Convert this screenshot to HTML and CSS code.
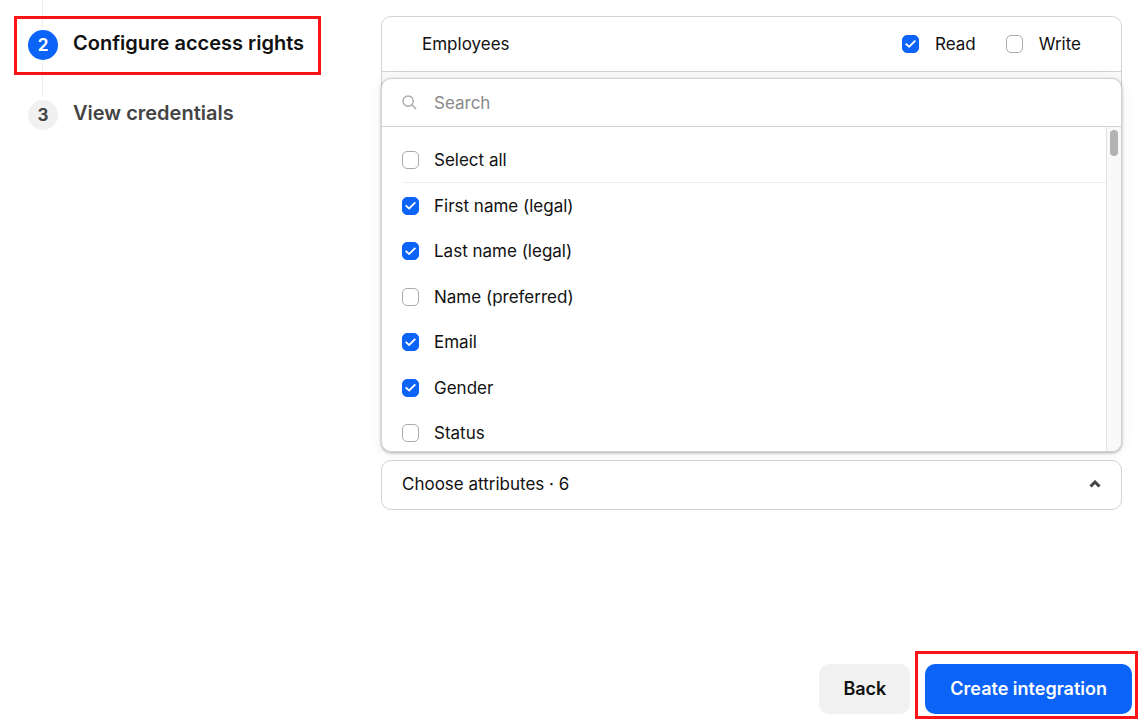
FILE: index.html
```html
<!DOCTYPE html>
<html lang="en">
  <head>
    <meta charset="UTF-8" />
    <meta name="viewport" content="width=device-width, initial-scale=1.0" />
    <link rel="stylesheet" href="styles.css">
    <title>Create integration</title>
  </head>
  <body>
    <div class="page">
      <div class="content">
        <ol class="steps">
          <li class="step step-done">
            <div class="marker"><span class="line"></span></div>
          </li>
          <li class="step step-active">
            <div class="marker">
              <span class="number">2</span>
              <span class="line"></span>
            </div>
            <h2 class="step-title highlight highlight-step">Configure access rights</h2>
          </li>
          <li class="step">
            <div class="marker"><span class="number">3</span></div>
            <h2 class="step-title">View credentials</h2>
          </li>
        </ol>

        <main class="access">
          <section class="card">
            <div class="card-header">
              <span class="card-name">Employees</span>
              <label class="option"><input type="checkbox" class="check" checked />Read</label>
              <label class="option"><input type="checkbox" class="check" />Write</label>
            </div>
          </section>

          <div class="select">
            <!-- opens upwards, above the select button -->
            <div class="dropdown" id="attributes">
              <div class="search">
                <svg class="search-icon" viewBox="0 0 16 16" aria-hidden="true">
                  <circle cx="6.5" cy="6.5" r="5.5" />
                  <path d="M10.5 10.5 15 15" />
                </svg>
                <input type="text" class="search-input" placeholder="Search" aria-label="Search" />
              </div>
              <div class="list">
                <div class="list-body">
                  <label class="option select-all"><input type="checkbox" class="check" />Select all</label>
                  <div class="rows">
                    <label class="option"><input type="checkbox" class="check" checked />First name (legal)</label>
                    <label class="option"><input type="checkbox" class="check" checked />Last name (legal)</label>
                    <label class="option"><input type="checkbox" class="check" />Name (preferred)</label>
                    <label class="option"><input type="checkbox" class="check" checked />Email</label>
                    <label class="option"><input type="checkbox" class="check" checked />Gender</label>
                    <label class="option"><input type="checkbox" class="check" />Status</label>
                  </div>
                </div>
                <div class="scrollbar"><div class="thumb"></div></div>
              </div>
            </div>
            <button type="button" class="select-button" aria-expanded="true" aria-controls="attributes">
              Choose attributes · 6
              <svg class="chevron" viewBox="0 0 12 8" aria-hidden="true">
                <path d="M1.5 6.5 6 2l4.5 4.5" />
              </svg>
            </button>
          </div>
        </main>
      </div>

      <footer class="actions">
        <button type="button" class="btn">Back</button>
        <div class="highlight highlight-button">
          <button type="button" class="btn btn-primary">Create integration</button>
        </div>
      </footer>
    </div>
  </body>
</html>
```

FILE: styles.css
```css
* {
  box-sizing: border-box;
}
body {
  margin: 0;
  background-color: #fff;
  color: #111;
  font-family: Inter, "Liberation Sans", sans-serif;
  font-size: 17px;
  line-height: 24px;
}
button,
input {
  font: inherit;
  color: inherit;
}
.page {
  min-height: 100vh;
  display: flex;
  flex-direction: column;
}
.content {
  flex: 1;
  display: grid;
  grid-template-columns: 353px 1fr;
  padding: 0 23px 0 28px;
}

/* steps */
.steps {
  list-style: none;
  margin: 0;
  padding: 0;
}
.step {
  display: flex;
  gap: 15px;
  min-height: 70px;
}
.step-done {
  min-height: 30px;
}
.marker {
  width: 30px;
  display: flex;
  flex-direction: column;
  align-items: center;
}
.number {
  width: 30px;
  height: 30px;
  border-radius: 50%;
  background-color: #f1f1f1;
  color: #444;
  font-weight: 700;
  line-height: 30px;
  text-align: center;
}
.line {
  flex: 1;
  width: 1px;
  margin: 3px 1px 3px 0;
  background-color: #ececec;
}
.step-done .line {
  margin-top: 0;
}
.step-title {
  margin: 0;
  align-self: flex-start;
  color: #444;
  font-size: 20px;
  font-weight: 600;
  line-height: 26px;
}
.step-active .number {
  background-color: #0b63f8;
  color: #fff;
}
.step-active .step-title {
  color: #111;
}

/* red frames */
.highlight {
  position: relative;
}
.highlight::after {
  content: "";
  position: absolute;
  border: 3px solid #fb1317;
  pointer-events: none;
}
.highlight-step::after {
  inset: -14px -17px -19px -59px;
}
.highlight-button::after {
  inset: -13px -6px -5px -10px;
}

/* access rights */
.access {
  padding-top: 16px;
}
.card {
  height: 424px;
  margin-bottom: 20px;
  border: 1px solid #d2d2d2;
  border-radius: 10px;
  background-color: #fafafa;
  overflow: hidden;
}
.card-header {
  display: flex;
  align-items: center;
  gap: 30px;
  height: 55px;
  padding: 0 40px;
  border-bottom: 1px solid #d2d2d2;
  background-color: #fff;
}
.card-name {
  flex: 1;
}
.option {
  display: flex;
  align-items: center;
  gap: 15px;
}
.card-header .option {
  gap: 16px;
}
.check {
  appearance: none;
  width: 17px;
  height: 18px;
  margin: 0;
  border: 1px solid #aaa;
  border-radius: 5px;
  background-color: #fff;
}
.check:checked {
  border-color: #0b63f8;
  background-color: #0b63f8;
  display: grid;
  place-items: center;
}
.check:checked::before {
  content: "";
  width: 11px;
  height: 8px;
  background-color: #fff;
  clip-path: polygon(0 54%, 12% 36%, 37% 68%, 88% 0, 100% 16%, 38% 100%);
}

/* attribute select */
.select {
  position: relative;
}
.select-button {
  display: flex;
  justify-content: space-between;
  align-items: center;
  width: 100%;
  height: 50px;
  padding: 0 20px 2px;
  border: 1px solid #d2d2d2;
  border-radius: 10px;
  background-color: #fff;
}
.chevron {
  width: 12px;
  height: 8px;
  fill: none;
  stroke: #444;
  stroke-width: 3;
}
.dropdown {
  position: absolute;
  left: 0;
  right: 0;
  bottom: calc(100% + 8px);
  border: 1px solid #d2d2d2;
  border-radius: 10px;
  background-color: #fff;
  box-shadow: 0 1px 3px rgba(0, 0, 0, 0.3), 0 2px 16px rgba(0, 0, 0, 0.06);
  overflow: hidden;
}
.search {
  display: flex;
  align-items: center;
  gap: 17px;
  height: 48px;
  padding: 0 20px;
  border-bottom: 1px solid #d2d2d2;
}
.search-icon {
  width: 15px;
  height: 15px;
  fill: none;
  stroke: #aaa;
  stroke-width: 1.5;
}
.search-input {
  flex: 1;
  padding: 0;
  border: 0;
  outline: 0;
  background: none;
}
.search-input::placeholder {
  color: #8a8a8a;
}
.list {
  display: flex;
  height: 324px;
  overflow: hidden;
}
.list-body {
  flex: 1;
  padding: 10px 0 0 20px;
}
.select-all {
  height: 46px;
  border-bottom: 1px solid #efefef;
}
.rows {
  display: grid;
  grid-template-rows: repeat(6, 1fr);
  height: 273px;
}
.scrollbar {
  width: 15px;
  padding: 3px 3px 0;
  border-left: 1px solid #e2e2e2;
  background-color: #f9f9f9;
}
.thumb {
  width: 8px;
  height: 26px;
  border-radius: 4px;
  background-color: #b3b3b3;
}

/* bottom buttons */
.actions {
  display: flex;
  justify-content: flex-end;
  gap: 15px;
  padding: 0 13px 9px;
}
.btn {
  height: 50px;
  padding: 0 24px;
  border: 0;
  border-radius: 10px;
  background-color: #f1f1f1;
  font-size: 18px;
  font-weight: 600;
}
.btn-primary {
  padding: 0 25px;
  background-color: #0b63f8;
  color: #fff;
}
```
